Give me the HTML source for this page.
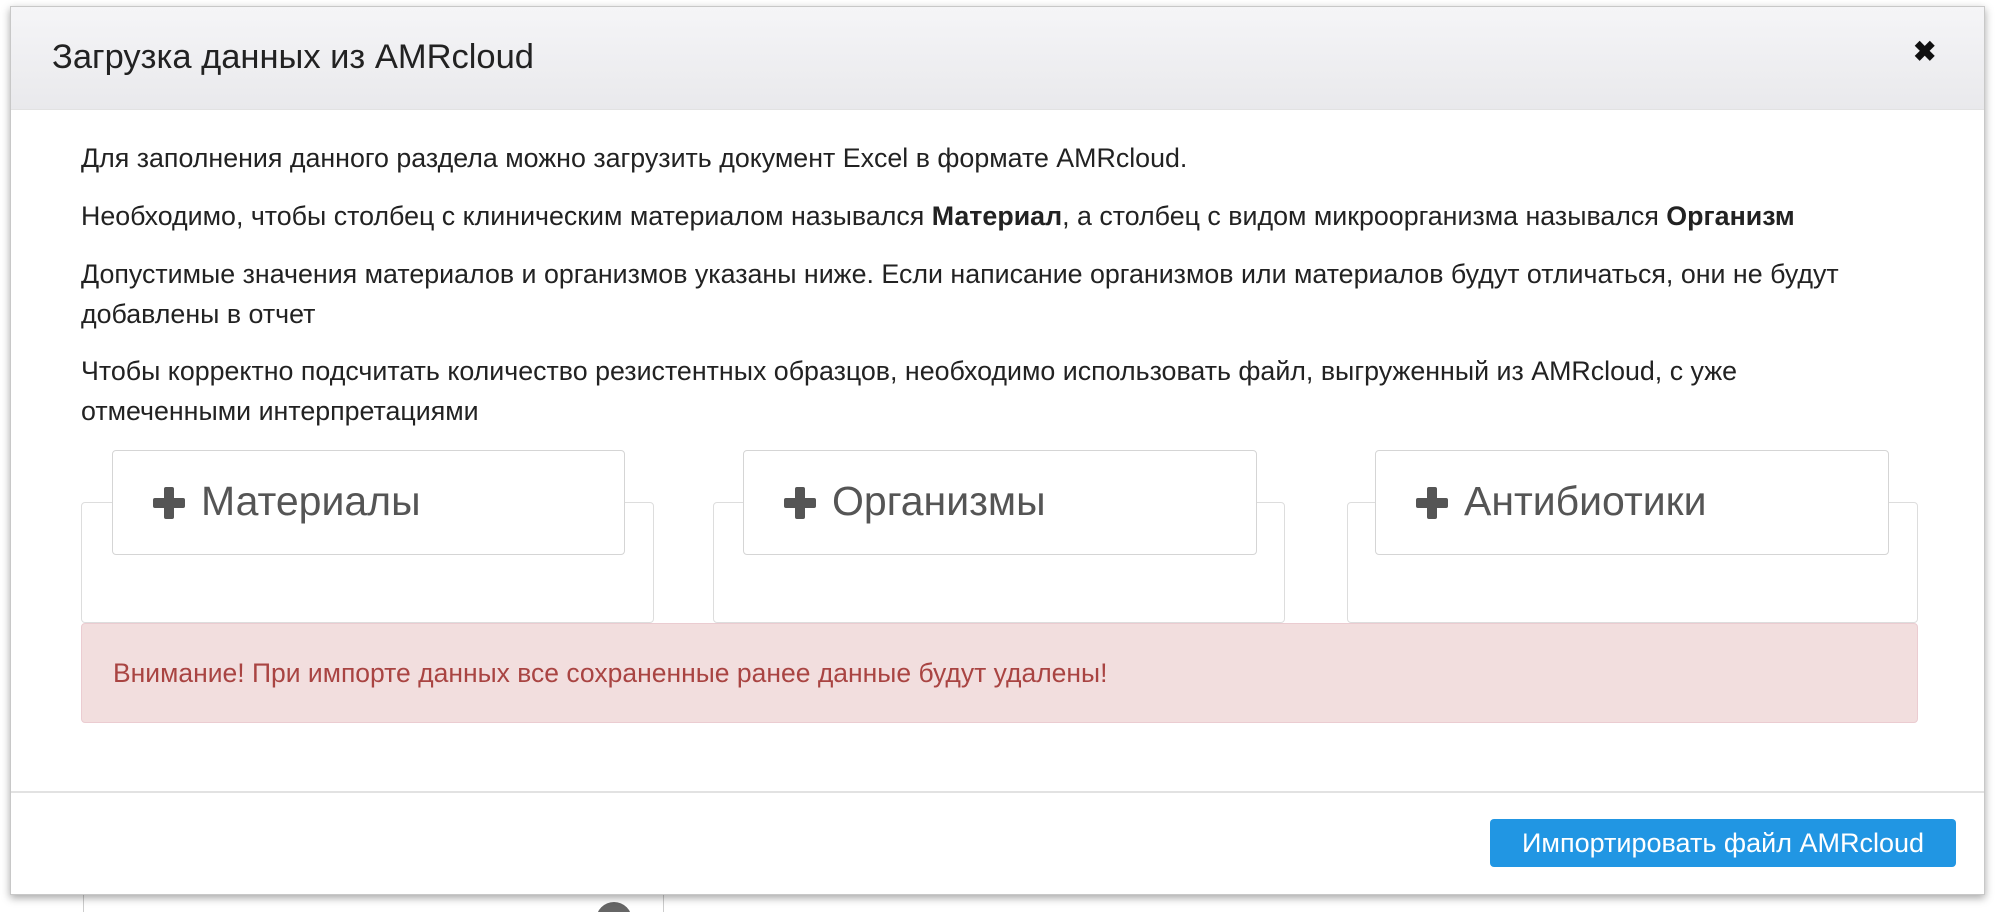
<!DOCTYPE html>
<html style="background:#fff;height:912px;overflow:hidden"><head><meta charset="utf-8"><style>
body{margin:0;width:2000px;height:912px;overflow:hidden;background:#fff;font-family:"Liberation Sans",sans-serif;position:relative}
.modal{position:absolute;left:10px;top:6px;width:1975px;height:889px;background:#fff;border:1px solid #c8c8c8;box-shadow:0 3px 8px rgba(0,0,0,.35);box-sizing:border-box}
.hdr{position:absolute;left:0;top:0;right:0;height:102px;background:linear-gradient(#f5f5f7,#e9e9ec);border-bottom:1px solid #e2e2e2}
.title{position:absolute;left:41px;top:31px;font-size:34.5px;color:#222}
.x{position:absolute;left:1902px;top:28px;font-size:28px;font-weight:bold;color:#111}
p{position:absolute;left:70px;margin:0;font-size:26.8px;color:#222;white-space:nowrap;line-height:40px}
.ob{position:absolute;border:1px solid #ddd;border-radius:4px;background:#fff;box-sizing:border-box}
.ib{position:absolute;border:1px solid #d5d5d5;border-radius:4px;background:#fff;box-sizing:border-box;font-size:41px;color:#555}
.ib span{position:absolute;left:88px;top:27px}
.plus{position:absolute;left:40px;top:36px;width:32px;height:32px}
.plus:before{content:"";position:absolute;left:11px;top:0;width:10px;height:32px;background:#555;border-radius:2px}
.plus:after{content:"";position:absolute;left:0;top:11px;width:32px;height:10px;background:#555;border-radius:2px}
.alert{position:absolute;left:70px;top:616px;width:1837px;height:100px;background:#f2dede;border:1px solid #ebccd1;border-radius:4px;box-sizing:border-box;color:#a94442;font-size:26.5px}
.alert span{position:absolute;left:31px;top:34px}
.ft{position:absolute;left:0;right:0;top:784px;border-top:2px solid #e2e2e2}
.btn{position:absolute;left:1479px;top:812px;width:466px;height:48px;background:#2196e3;border-radius:4px;color:#fff;font-size:27px;text-align:center;line-height:48px}
</style></head><body>
<div style="position:absolute;left:83px;top:895px;width:1px;height:17px;background:#ccc"></div>
<div style="position:absolute;left:663px;top:895px;width:1px;height:17px;background:#ccc"></div>
<div style="position:absolute;left:596px;top:902px;width:36px;height:36px;border-radius:50%;background:#666"></div>
<div class="modal">
<div class="hdr"><div class="title">Загрузка данных из AMRcloud</div><div class="x">✖</div></div>
<p style="top:131px">Для заполнения данного раздела можно загрузить документ Excel в формате AMRcloud.</p>
<p style="top:189px">Необходимо, чтобы столбец с клиническим материалом назывался <b>Материал</b>, а столбец с видом микроорганизма назывался <b>Организм</b></p>
<p style="top:247px">Допустимые значения материалов и организмов указаны ниже. Если написание организмов или материалов будут отличаться, они не будут</p>
<p style="top:287px">добавлены в отчет</p>
<p style="top:344px">Чтобы корректно подсчитать количество резистентных образцов, необходимо использовать файл, выгруженный из AMRcloud, с уже</p>
<p style="top:384px">отмеченными интерпретациями</p>
<div class="ob" style="left:70px;top:495px;width:573px;height:121px"></div>
<div class="ib" style="left:101px;top:443px;width:513px;height:105px"><div class="plus"></div><span>Материалы</span></div>
<div class="ob" style="left:702px;top:495px;width:572px;height:121px"></div>
<div class="ib" style="left:732px;top:443px;width:514px;height:105px"><div class="plus"></div><span>Организмы</span></div>
<div class="ob" style="left:1336px;top:495px;width:571px;height:121px"></div>
<div class="ib" style="left:1364px;top:443px;width:514px;height:105px"><div class="plus"></div><span>Антибиотики</span></div>
<div class="alert"><span>Внимание! При импорте данных все сохраненные ранее данные будут удалены!</span></div>
<div class="ft"></div>
<div class="btn">Импортировать файл AMRcloud</div>
</div>
</body></html>
